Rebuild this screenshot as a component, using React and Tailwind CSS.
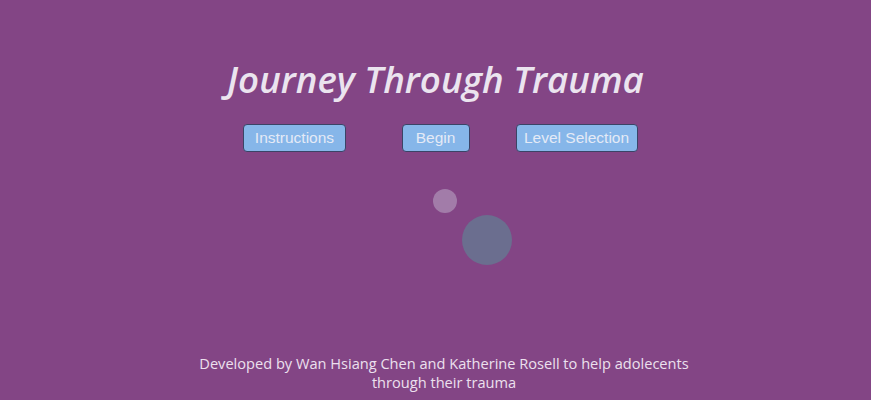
export default function App() {
	const buttons = [
		{ label: "Instructions", w: "w-[103px]" },
		{ label: "Begin", w: "w-[68px]" },
		{ label: "Level Selection", w: "w-[122px]" },
	];

	return (
		<div className="w-[871px] h-[400px] bg-[#834585] flex flex-col items-center overflow-hidden">
			<h1 className="mt-[54px] text-[36.7px] leading-[50px] italic font-semibold text-[#ebe4ef] font-['Open_Sans',sans-serif]">
				Journey Through Trauma
			</h1>

			{/* menu buttons */}
			<div className="mt-[20px] grid grid-cols-[141px_141px_141px] justify-center">
				{buttons.map((b) => (
					<div key={b.label} className="flex justify-center">
						<button className={`${b.w} h-[28px] rounded-[4px] border border-[#3b4366] bg-[#86b6e9] text-[#e4eaf6] text-[15.5px] font-['Liberation_Sans',Arial,sans-serif]`}>
							{b.label}
						</button>
					</div>
				))}
			</div>

			{/* decorative circles */}
			<div className="relative w-[871px] h-[150px]">
				<div className="absolute left-[433px] top-[37px] w-[24px] h-[24px] rounded-full bg-[#a27ca9]"></div>
				<div className="absolute left-[462px] top-[63px] w-[50px] h-[50px] rounded-full bg-[#6b6e8f]"></div>
			</div>

			<p className="mt-auto mb-[8px] ml-[17px] w-[530px] text-center text-[14.6px] leading-[19px] text-[#ece0ee] font-['Open_Sans',sans-serif]">
				Developed by Wan Hsiang Chen and Katherine Rosell to help adolecents through their trauma
			</p>
		</div>
	);
}
